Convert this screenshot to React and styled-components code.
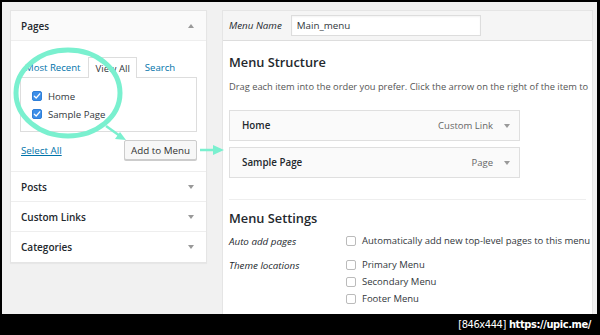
import React from "react";
import styled, { createGlobalStyle } from "styled-components";

const Global = createGlobalStyle`
  html, body { margin: 0; padding: 0; background: #000; }
  body { font-family: "Open Sans", "Liberation Sans", sans-serif; }
  * { box-sizing: border-box; }
`;

const Frame = styled.div`
  width: 600px;
  height: 335px;
  background: #000;
  display: flex;
  flex-direction: column;
  overflow: hidden;
`;

const Screen = styled.div`
  position: relative;
  margin: 2px 3px 0 2px;
  height: 312px;
  background: #f1f1f1;
  overflow: hidden;
  display: flex;
  align-items: flex-start;
  gap: 15px;
  padding: 8px 0 0 8px;
`;

const Footer = styled.div`
  flex: 1;
  display: flex;
  align-items: center;
  justify-content: flex-end;
  padding-right: 9px;
  color: #fff;
  font-family: "DejaVu Sans Condensed", "DejaVu Sans", sans-serif;
  font-size: 11px;
  letter-spacing: -0.4px;
  gap: 3px;
`;

const FootBold = styled.span`
  font-weight: bold;
`;

/* ---------- left column ---------- */
const Side = styled.div`
  width: 197px;
  background: #fff;
  border: 1px solid #e5e5e5;
  box-shadow: 0 1px 1px rgba(0,0,0,0.04);
`;

const SectionHead = styled.div`
  height: ${p => p.$h || 30}px;
  display: flex;
  align-items: center;
  justify-content: space-between;
  padding: 0 10px 0 10px;
  font-size: 10px;
  font-weight: 600;
  color: #23282d;
  background: ${p => (p.$open ? "#fafafa" : "#fff")};
  border-top: ${p => (p.$first ? "none" : "1px solid #eee")};
  border-bottom: ${p => (p.$open ? "1px solid #eee" : "none")};
`;

const Caret = styled.span`
  width: 0;
  height: 0;
  border-left: 3px solid transparent;
  border-right: 3px solid transparent;
  ${p =>
    p.$up
      ? "border-bottom: 4px solid #999;"
      : "border-top: 4px solid #999;"}
  margin-right: ${p => p.$mr || 2}px;
`;

const SideBody = styled.div`
  padding: 16px 9px 11px 9px;
`;

const Tabs = styled.div`
  display: flex;
  align-items: flex-end;
  gap: 3px;
  height: 20px;
`;

const Tab = styled.div`
  height: ${p => (p.$active ? 21 : 20)}px;
  padding: 0 ${p => (p.$active ? 6 : 4)}px;
  display: flex;
  align-items: center;
  font-size: 9.6px;
  color: ${p => (p.$active ? "#32373c" : "#0073aa")};
  background: #fff;
  border: 1px solid ${p => (p.$active ? "#ddd" : "transparent")};
  border-bottom: none;
  position: relative;
  z-index: 1;
  margin-bottom: ${p => (p.$active ? -1 : 0)}px;
`;

const TabPanel = styled.div`
  height: 55px;
  border: 1px solid #ddd;
  padding: 13px 0 0 11px;
  display: flex;
  flex-direction: column;
  gap: 8px;
`;

const CheckRow = styled.label`
  display: flex;
  align-items: center;
  gap: 6px;
  font-size: 9.6px;
  color: #32373c;
  height: 10px;
`;

const Box = styled.span`
  width: 10px;
  height: 10px;
  border-radius: 2px;
  flex: none;
  display: inline-flex;
  align-items: center;
  justify-content: center;
  background: ${p => (p.$on ? "#3c8ee8" : "#fff")};
  border: 1px solid ${p => (p.$on ? "#2f7fd8" : "#bbb")};
`;

const Actions = styled.div`
  display: flex;
  align-items: center;
  justify-content: space-between;
  margin-top: 8px;
`;

const LinkText = styled.span`
  font-size: 9.8px;
  color: #0073aa;
  text-decoration: underline;
  margin-left: 1px;
`;

const Button = styled.div`
  height: 20px;
  padding: 0 6px;
  display: flex;
  align-items: center;
  font-size: 9.8px;
  color: #333;
  background: #f7f7f7;
  border: 1px solid #ccc;
  border-radius: 2px;
  box-shadow: 0 1px 0 #ccc;
`;

/* ---------- right column ---------- */
const Main = styled.div`
  width: 371px;
  height: 340px;
  background: #fff;
  border: 1px solid #e5e5e5;
  overflow: hidden;
`;

const MainHead = styled.div`
  height: 30px;
  display: flex;
  align-items: center;
  gap: 9px;
  padding-left: 6px;
  background: #f5f5f5;
  border-bottom: 1px solid #ddd;
`;

const Label = styled.span`
  font-size: 9.8px;
  font-style: italic;
  color: #23282d;
  width: ${p => p.$w || "auto"};
  flex: none;
`;

const Input = styled.div`
  width: 190px;
  height: 21px;
  background: #fff;
  border: 1px solid #ddd;
  display: flex;
  align-items: center;
  padding-left: 5px;
  font-size: 9.8px;
  color: #32373c;
  box-shadow: inset 0 1px 2px rgba(0,0,0,0.05);
`;

const MainBody = styled.div`
  padding: 0 6px;
`;

const H3 = styled.div`
  font-size: 12.8px;
  font-weight: 600;
  color: #23282d;
  margin-top: ${p => p.$mt || 0}px;
  height: 18px;
  line-height: 18px;
`;

const Desc = styled.div`
  font-size: 9.3px;
  color: #555;
  white-space: nowrap;
  margin-top: 9px;
`;

const ItemList = styled.div`
  display: flex;
  flex-direction: column;
  gap: 6px;
  margin-top: 17px;
  width: 291px;
`;

const Item = styled.div`
  height: 31px;
  display: flex;
  align-items: center;
  padding: 0 7px 0 12px;
  background: #fafafa;
  border: 1px solid #dfdfdf;
  font-size: 9.8px;
`;

const ItemTitle = styled.span`
  font-weight: 600;
  color: #23282d;
  flex: 1;
`;

const ItemType = styled.span`
  color: #666;
  margin-right: 11px;
  font-size: 9.5px;
`;

const Divider = styled.div`
  border-top: 1px solid #eee;
  margin-top: 21px;
`;

const SettingRow = styled.div`
  display: flex;
  align-items: flex-start;
  margin-top: ${p => p.$mt || 0}px;
`;

const Options = styled.div`
  display: flex;
  flex-direction: column;
  gap: 6px;
`;

const Opt = styled.div`
  display: flex;
  align-items: center;
  gap: 6px;
  font-size: 9.5px;
  color: #32373c;
  height: 11px;
  white-space: nowrap;
`;

const Overlay = styled.svg`
  position: absolute;
  left: 0;
  top: 0;
  pointer-events: none;
  z-index: 5;
`;

const Check = () => (
  <svg width="8" height="8" viewBox="0 0 8 8">
    <path d="M1.3 4.2 L3.2 6 L6.8 1.8" fill="none" stroke="#fff" strokeWidth="1.3" strokeLinecap="round" strokeLinejoin="round" />
  </svg>
);

export default function App() {
  const mint = "#7af0cf";
  return (
    <>
      <Global />
      <Frame>
        <Screen>
          <Side>
            <SectionHead $open $first>
              <span>Pages</span>
              <Caret $up />
            </SectionHead>
            <SideBody>
              <Tabs>
                <Tab>Most Recent</Tab>
                <Tab $active>View All</Tab>
                <Tab>Search</Tab>
              </Tabs>
              <TabPanel>
                <CheckRow><Box $on><Check /></Box>Home</CheckRow>
                <CheckRow><Box $on><Check /></Box>Sample Page</CheckRow>
              </TabPanel>
              <Actions>
                <LinkText>Select All</LinkText>
                <Button>Add to Menu</Button>
              </Actions>
            </SideBody>
            <SectionHead><span>Posts</span><Caret /></SectionHead>
            <SectionHead><span>Custom Links</span><Caret /></SectionHead>
            <SectionHead $h={31}><span>Categories</span><Caret /></SectionHead>
          </Side>

          <Main>
            <MainHead>
              <Label>Menu Name</Label>
              <Input>Main_menu</Input>
            </MainHead>
            <MainBody>
              <H3 $mt={12}>Menu Structure</H3>
              <Desc>Drag each item into the order you prefer. Click the arrow on the right of the item to</Desc>
              <ItemList>
                <Item><ItemTitle>Home</ItemTitle><ItemType>Custom Link</ItemType><Caret /></Item>
                <Item><ItemTitle>Sample Page</ItemTitle><ItemType>Page</ItemType><Caret /></Item>
              </ItemList>
              <Divider />
              <H3 $mt={9}>Menu Settings</H3>
              <SettingRow $mt={8}>
                <Label $w="117px">Auto add pages</Label>
                <Options>
                  <Opt><Box />Automatically add new top-level pages to this menu</Opt>
                </Options>
              </SettingRow>
              <SettingRow $mt={11}>
                <Label $w="117px">Theme locations</Label>
                <Options>
                  <Opt><Box />Primary Menu</Opt>
                  <Opt><Box />Secondary Menu</Opt>
                  <Opt><Box />Footer Menu</Opt>
                </Options>
              </SettingRow>
            </MainBody>
          </Main>

          <Overlay width="596" height="312" viewBox="0 0 596 312">
            <ellipse cx="66" cy="91" rx="52" ry="43" fill="none" stroke={mint} strokeWidth="5" />
            <path d="M104 124 L118 134" stroke={mint} strokeWidth="2.5" fill="none" />
            <path d="M124 138 L113 137 L118 130 Z" fill={mint} />
            <path d="M198 148 L212 148" stroke={mint} strokeWidth="2.5" fill="none" />
            <path d="M222 148 L211 143 L211 153 Z" fill={mint} />
          </Overlay>
        </Screen>
        <Footer>
          <span>[846x444]</span>
          <FootBold>https://upic.me/</FootBold>
        </Footer>
      </Frame>
    </>
  );
}
